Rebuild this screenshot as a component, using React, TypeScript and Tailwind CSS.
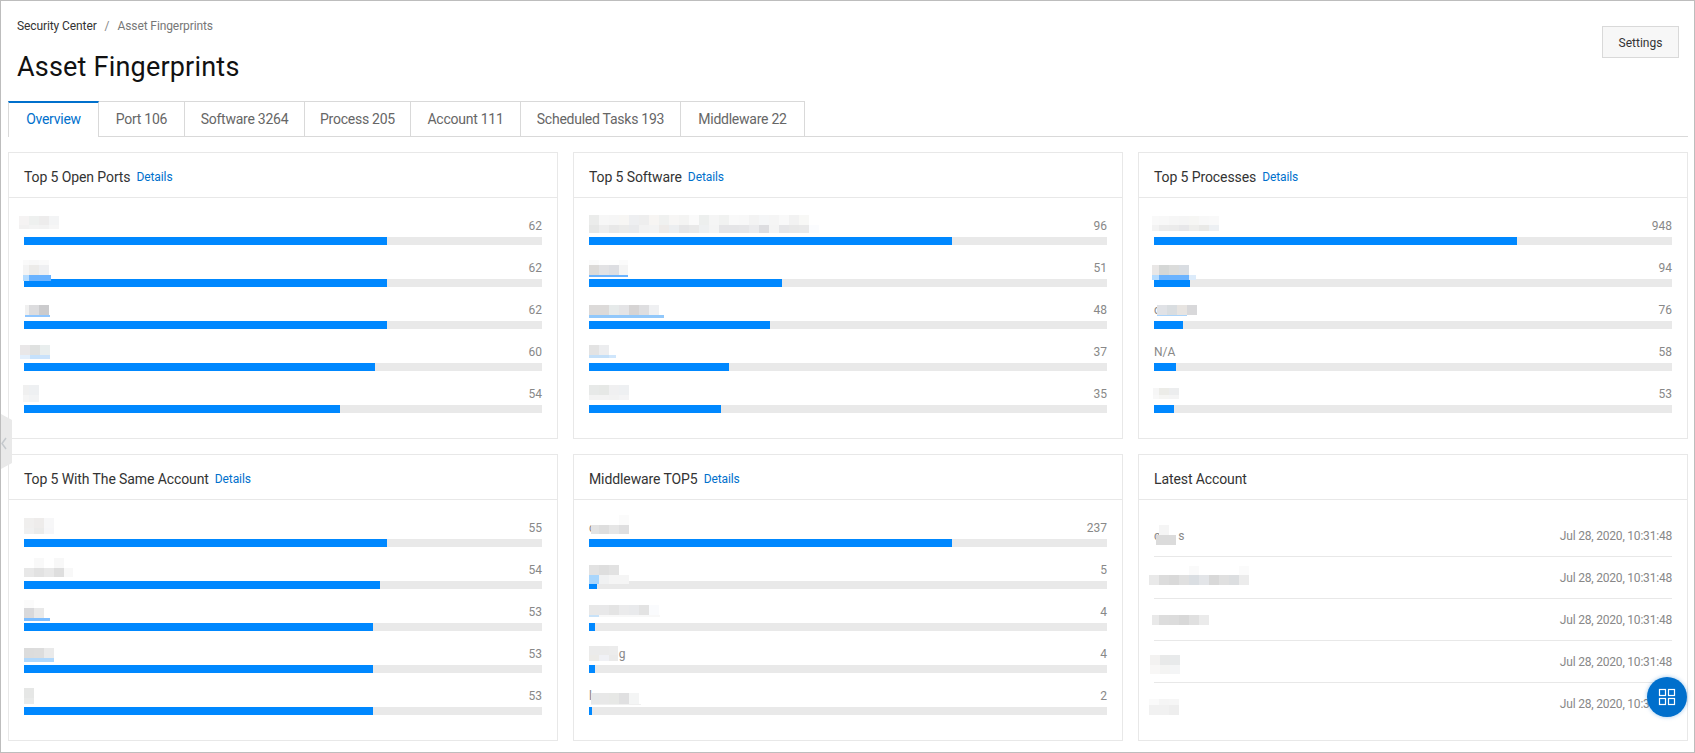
const font = "font-['Roboto','Liberation_Sans',sans-serif]";

// [row height, cell width, cell classes split by " | "]
type MosaicRow = [string, string, string];

interface Blur {
  pos: string;
  rows: MosaicRow[];
}

interface BarRow {
  label?: string;
  value: number;
  blur?: Blur;
}

function Mosaic({ pos, rows }: Blur) {
  return (
    <div className={`absolute ${pos}`}>
      {rows.map((row, i) => (
        <div key={i} className={`flex ${row[0]}`}>
          {row[2].split(" | ").map((cell, j) => (
            <div key={j} className={`h-full ${row[1]} ${cell}`} />
          ))}
        </div>
      ))}
    </div>
  );
}

function Bars({ rows }: { rows: BarRow[] }) {
  const max = rows[0].value;
  return (
    <div className="flex flex-col gap-[14px] px-[15px] pt-[19px]">
      {rows.map((row, i) => (
        <div key={i} className="relative">
          <div className="flex h-[18px] items-center justify-between text-xs leading-[18px] text-[#888888]">
            <span className="whitespace-pre">{row.label}</span>
            <span>{row.value}</span>
          </div>
          <div className="mt-[2px] h-2 bg-[#e9e9e9]">
            <div className="h-full bg-[#0088ff]" style={{ width: `${(row.value / max) * 70}%` }} />
          </div>
          {row.blur && <Mosaic {...row.blur} />}
        </div>
      ))}
    </div>
  );
}

function Card({ title, details, children }: { title: string; details?: boolean; children: React.ReactNode }) {
  return (
    <div className="h-[287px] border border-[#e8e8e8] bg-white">
      <div className="flex h-[45px] items-center border-b border-[#e8e8e8] px-[15px] pt-[4px]">
        <span className="text-sm tracking-[-0.1px] text-[#333333]">{title}</span>
        {details && <a className="ml-[6px] text-xs tracking-[-0.1px] text-[#0070cc]">Details</a>}
      </div>
      {children}
    </div>
  );
}

const ports: BarRow[] = [
  { value: 62, blur: { pos: "left-[-5px] top-[-1px]", rows: [
    ["h-[9px]", "w-[10px]", "bg-[#f5f3f3] | bg-[#eef0ef] | bg-[#edecec] | bg-[#f3f4f5]"],
    ["h-[4px]", "w-[10px]", "bg-[#f2f1f1] | bg-[#f3f3f3] | bg-[#f2f2f2] | bg-[#f6f6f6]"],
  ] } },
  { value: 62, blur: { pos: "left-[-1px] top-[1px]", rows: [
    ["h-[5px]", "", "w-[6px] bg-[#fafafa] | w-[10px] bg-[#f8f8f8] | w-[10px] bg-[#fafafa]"],
    ["h-[10px]", "", "w-[6px] bg-[#f4f4f4] | w-[10px] bg-[#ecebe9] | w-[10px] bg-[#eff0f2]"],
    ["h-[6px]", "", "w-[6px] bg-[#b5dcff] | w-[22px] bg-[#6ab3ff]"],
  ] } },
  { value: 62, blur: { pos: "left-[1px] top-[4px]", rows: [
    ["h-[10px]", "", "w-[4px] bg-[#f0f0f0] | w-[10px] bg-[#dcdcde] | w-[10px] bg-[#cbcbcd]"],
    ["h-[2px]", "", "w-[25px] bg-[#8fc6ff]"],
  ] } },
  { value: 60, blur: { pos: "left-[-4px] top-[2px]", rows: [
    ["h-[10px]", "w-[10px]", "bg-[#e9e7e8] | bg-[#dfe1e0] | bg-[#e9eeee]"],
    ["h-[4px]", "w-[10px]", "bg-[#e3effc] | bg-[#c5e1fb] | bg-[#c9e2fb]"],
  ] } },
  { value: 54, blur: { pos: "left-[-1px] top-0", rows: [
    ["h-[10px]", "", "w-[6px] bg-[#f0f0f0] | w-[10px] bg-[#eef0f2]"],
    ["h-[7px]", "", "w-[6px] bg-[#f5f5f5] | w-[10px] bg-[#f2f3f4]"],
  ] } },
];

const software: BarRow[] = [
  { value: 96, blur: { pos: "left-0 top-[-2px]", rows: [
    ["h-[10px]", "w-[10px]", "bg-[#ebeceb] | bg-[#f7f7f7] | bg-[#f6f6f6] | bg-[#f7f6f4] | bg-[#eeeff1] | bg-[#eeeeee] | bg-[#f7f5f3] | bg-[#f0f1f0] | bg-[#f7f6f5] | bg-[#f4f4f3] | bg-[#fafafa] | bg-[#edefee] | bg-[#f5f5f5] | bg-[#f1f2f1] | bg-[#f9f9f9] | bg-[#f8f8f8] | bg-[#f3f3f3] | bg-[#f5f6f7] | bg-[#f5f5f5] | bg-[#f9f9f9] | bg-[#f2f2f2] | bg-[#f8f8f6]"],
    ["h-[8px]", "w-[10px]", "bg-[#e6e7e6] | bg-[#eeeeee] | bg-[#e8e8e8] | bg-[#ebebea] | bg-[#e9eaec] | bg-[#f2f2f2] | bg-[#f3f3f3] | bg-[#eeebe9] | bg-[#eceef0] | bg-[#e6e6e7] | bg-[#e9e9e9] | bg-[#eef0f1] | bg-[#f4f4f4] | bg-[#e5e5e7] | bg-[#e5e5e7] | bg-[#e6e6e8] | bg-[#ebebed] | bg-[#dddde0] | bg-[#f4f4f4] | bg-[#e6e6e8] | bg-[#e8e8e8] | bg-[#e9e9e9] | bg-[#fbfcfe]"],
  ] } },
  { value: 51, blur: { pos: "left-0 top-[1px]", rows: [
    ["h-[5px]", "", "w-[10px] bg-[#fbfbfb] | w-[20px] bg-[#fefefe] | w-[9px] bg-[#fbfbfb]"],
    ["h-[10px]", "", "w-[10px] bg-[#dcdad8] | w-[10px] bg-[#e2e2e4] | w-[10px] bg-[#dddee2] | w-[9px] bg-[#f4f4f4]"],
    ["h-[2px]", "", "w-[39px] bg-[#6ab3ff]"],
  ] } },
  { value: 48, blur: { pos: "left-0 top-[4px]", rows: [
    ["h-[10px]", "w-[10px]", "bg-[#dcdad9] | bg-[#dcdad9] | bg-[#e6eaea] | bg-[#e4e4e6] | bg-[#d6d4d4] | bg-[#dedee0] | bg-[#eff0f2]"],
    ["h-[3px]", "", "w-[75px] bg-[#91c8fb]"],
  ] } },
  { value: 37, blur: { pos: "left-0 top-[2px]", rows: [
    ["h-[10px]", "w-[10px]", "bg-[#e3e3e3] | bg-[#ecedef]"],
    ["h-[3px]", "", "w-[20px] bg-[#c3dff8] | w-[7px] bg-[#cfe6fc]"],
  ] } },
  { value: 35, blur: { pos: "left-0 top-0", rows: [
    ["h-[10px]", "w-[10px]", "bg-[#e7e9e8] | bg-[#e6e8e6] | bg-[#f0f0f1] | bg-[#eef0f2]"],
    ["h-[5px]", "w-[10px]", "bg-[#f3f3f3] | bg-[#f3f3f3] | bg-[#f2f2f2] | bg-[#f4f4f5]"],
  ] } },
];

const processes: BarRow[] = [
  { value: 948, blur: { pos: "left-[-2px] top-[-1px]", rows: [
    ["h-[9px]", "", "w-[7px] bg-[#f9f9f9] | w-[10px] bg-[#f8f8f8] | w-[10px] bg-[#f6f6f6] | w-[10px] bg-[#f5f5f5] | w-[10px] bg-[#f6f6f4] | w-[10px] bg-[#f8f8f8] | w-[10px] bg-[#f9f9f9]"],
    ["h-[6px]", "", "w-[7px] bg-[#f3f3f3] | w-[10px] bg-[#ececec] | w-[10px] bg-[#ebebeb] | w-[10px] bg-[#e7e7e9] | w-[10px] bg-[#eeeeec] | w-[10px] bg-[#e9e9e7] | w-[10px] bg-[#edf0f3]"],
  ] } },
  { value: 94, blur: { pos: "left-[-2px] top-[6px]", rows: [
    ["h-[10px]", "", "w-[7px] bg-[#e9e7e6] | w-[10px] bg-[#d5d7d6] | w-[10px] bg-[#dbdcdb] | w-[10px] bg-[#d9dde2]"],
    ["h-[5px]", "", "w-[7px] bg-[#b5dcff] | w-[30px] bg-[#6ab3ff] | w-[7px] bg-[#dcebfa]"],
  ] } },
  { label: "c", value: 76, blur: { pos: "left-[3px] top-[4px]", rows: [
    ["h-[10px]", "w-[10px]", "bg-[#e0e2e6] | bg-[#d9dde0] | bg-[#e7e4e1] | bg-[#d8d8da]"],
    ["h-[1px]", "", "w-[30px] bg-[#aad4fb]"],
  ] } },
  { label: "N/A", value: 58 },
  { value: 53, blur: { pos: "left-[-1px] top-[3px]", rows: [
    ["h-[7px]", "", "w-[6px] bg-[#f6f6f6] | w-[10px] bg-[#ecece8] | w-[10px] bg-[#ecedee]"],
    ["h-[4px]", "", "w-[6px] bg-[#f8f8f8] | w-[10px] bg-[#f5f5f3] | w-[10px] bg-[#f4f4f4]"],
  ] } },
];

const accounts: BarRow[] = [
  { value: 55, blur: { pos: "left-0 top-[-1px]", rows: [
    ["h-[10px]", "w-[10px]", "bg-[#f0efee] | bg-[#eeeceb] | bg-[#f7f7f8]"],
    ["h-[6px]", "w-[10px]", "bg-[#f0f0f0] | bg-[#ebebea] | bg-[#f6f6f8]"],
  ] } },
  { value: 54, blur: { pos: "left-0 top-[-3px]", rows: [
    ["h-[10px]", "w-[10px]", "bg-white | bg-[#f9f9f9] | bg-white | bg-[#f8f8f8]"],
    ["h-[9px]", "", "w-[10px] bg-[#e8e8e8] | w-[10px] bg-[#e2e2e2] | w-[10px] bg-[#e8e8e8] | w-[10px] bg-[#dedede] | w-[9px] bg-[#f8f8f8]"],
  ] } },
  { value: 53, blur: { pos: "left-0 top-[-3px]", rows: [
    ["h-[8px]", "w-[10px]", "bg-[#fbfbfb]"],
    ["h-[10px]", "w-[10px]", "bg-[#d9d9db] | bg-[#e9e9e9]"],
    ["h-[3px]", "", "w-[26px] bg-[#7cbdff]"],
  ] } },
  { value: 53, blur: { pos: "left-0 top-[3px]", rows: [
    ["h-[10px]", "w-[10px]", "bg-[#dcdcdc] | bg-[#dddddd] | bg-[#eaeaea]"],
    ["h-[4px]", "", "w-[30px] bg-[#b0d8fc]"],
  ] } },
  { value: 53, blur: { pos: "left-0 top-[1px]", rows: [
    ["h-[10px]", "w-[10px]", "bg-[#e6e7e6]"],
    ["h-[6px]", "w-[10px]", "bg-[#e9eae9]"],
  ] } },
];

const middleware: BarRow[] = [
  { label: "c", value: 237, blur: { pos: "left-[2px] top-[-4px]", rows: [
    ["h-[10px]", "", "w-[28px] bg-transparent | w-[10px] bg-[#fbfbfb]"],
    ["h-[9px]", "", "w-[8px] bg-[#e3e3e3] | w-[10px] bg-[#dedede] | w-[10px] bg-[#e6e6e6] | w-[10px] bg-[#dfdfe0]"],
  ] } },
  { value: 5, blur: { pos: "left-0 top-[4px]", rows: [
    ["h-[10px]", "w-[10px]", "bg-[#e2e2e2] | bg-[#dedede] | bg-[#e2e2e2]"],
    ["h-[9px]", "w-[10px]", "bg-[#a9d6fc] | bg-[#f0f1f2] | bg-[#f5f5f5] | bg-[#f5f5f5]"],
  ] } },
  { value: 4, blur: { pos: "left-0 top-[2px]", rows: [
    ["h-[10px]", "w-[10px]", "bg-[#e8e8e8] | bg-[#e8e8e9] | bg-[#e4e4e4] | bg-[#ebebec] | bg-[#e9eaec] | bg-[#e3e3e3] | bg-[#fafbfd]"],
    ["h-[2px]", "", "w-[10px] bg-[#c8e2f8] | w-[61px] bg-[#f8f8f8]"],
  ] } },
  { label: "          g", value: 4, blur: { pos: "left-0 top-[1px]", rows: [
    ["h-[9px]", "", "w-[10px] bg-[#ebebeb] | w-[10px] bg-[#ebebeb] | w-[9px] bg-[#ececec]"],
    ["h-[6px]", "", "w-[10px] bg-[#ecebe8] | w-[10px] bg-[#f0f1f5] | w-[9px] bg-[#eaeaea]"],
  ] } },
  { label: "l", value: 2, blur: { pos: "left-[2px] top-[6px]", rows: [
    ["h-[11px]", "", "w-[8px] bg-[#e6e8e9] | w-[10px] bg-[#e8e8e8] | w-[10px] bg-[#e7e8e6] | w-[10px] bg-[#e0e0e1] | w-[10px] bg-[#f4f5f5]"],
    ["h-[1px]", "", "w-[50px] bg-[#f0f0f0]"],
  ] } },
];

const latest: { label?: string; blur: Blur }[] = [
  { label: "c      s", blur: { pos: "left-[2px] top-[10px]", rows: [
    ["h-[10px]", "", "w-[3px] bg-transparent | w-[10px] bg-[#f5f5f5]"],
    ["h-[10px]", "", "w-[20px] bg-[#dbdbdb]"],
  ] } },
  { blur: { pos: "left-[-5px] top-[9px]", rows: [
    ["h-[9px]", "w-[10px]", "bg-transparent | bg-transparent | bg-transparent | bg-transparent | bg-[#fafafa] | bg-transparent | bg-transparent | bg-transparent | bg-transparent | bg-[#fbfbfb]"],
    ["h-[10px]", "w-[10px]", "bg-[#e9e9e9] | bg-[#dcdcdc] | bg-[#d9d9d9] | bg-[#e0e0e0] | bg-[#dadee2] | bg-[#e3e5e8] | bg-[#d8d8d8] | bg-[#e0e0e0] | bg-[#dcdee0] | bg-[#ececec]"],
  ] } },
  { blur: { pos: "left-[-2px] top-[16px]", rows: [
    ["h-[10px]", "", "w-[7px] bg-[#e9e9e9] | w-[10px] bg-[#dddddd] | w-[10px] bg-[#dcdcdc] | w-[10px] bg-[#d8d8d8] | w-[10px] bg-[#e0e0e0] | w-[10px] bg-[#ebebeb]"],
  ] } },
  { blur: { pos: "left-[-4px] top-[14px]", rows: [
    ["h-[10px]", "w-[10px]", "bg-[#f3f2f1] | bg-[#e8e9e9] | bg-[#e8eaeb]"],
    ["h-[9px]", "w-[10px]", "bg-[#f8f7f6] | bg-[#f4f4f3] | bg-[#f4f5f6]"],
  ] } },
  { blur: { pos: "left-[-5px] top-[16px]", rows: [
    ["h-[6px]", "w-[10px]", "bg-[#fafafa] | bg-[#f5f5f5] | bg-[#f6f6f6]"],
    ["h-[10px]", "w-[10px]", "bg-[#f1f1f1] | bg-[#f1f1f1] | bg-[#eeeeee]"],
  ] } },
];

const tabs = [
  { name: "Overview", w: "w-[91px]" },
  { name: "Port 106", w: "w-[86px]" },
  { name: "Software 3264", w: "w-[120px]" },
  { name: "Process 205", w: "w-[106px]" },
  { name: "Account 111", w: "w-[110px]" },
  { name: "Scheduled Tasks 193", w: "w-[160px]" },
  { name: "Middleware 22", w: "w-[124px]" },
];

export default function App() {
  return (
    <div className={`relative h-[753px] overflow-hidden border border-[#bdbdbd] bg-white pl-[7px] pr-[6px] ${font}`}>
      {/* header */}
      <div className="flex h-[100px] items-start justify-between">
        <div className="pl-[9px]">
          <div className="mt-[16px] flex h-[18px] items-center text-xs tracking-[-0.1px]">
            <span className="text-[#333333]">Security Center</span>
            <span className="mx-[8px] text-[#888888]">/</span>
            <span className="text-[#777777]">Asset Fingerprints</span>
          </div>
          <h1 className="mt-[14px] text-[27px] leading-[36px] tracking-[0.2px] text-[#111111]">Asset Fingerprints</h1>
        </div>
        <button className="mr-[9px] mt-[25px] h-[32px] w-[77px] border border-[#d9d9d9] bg-[#f7f7f7] pt-[2px] text-xs text-[#333333]">
          Settings
        </button>
      </div>

      {/* tabs */}
      <div className="flex h-[36px] border-b border-[#d9d9d9]">
        {tabs.map((tab, i) => (
          <div
            key={tab.name}
            className={
              i === 0
                ? `${tab.w} -mb-px h-[36px] border-l border-r border-t-2 border-l-[#d9d9d9] border-r-[#d9d9d9] border-t-[#0070cc] bg-white text-center text-sm leading-[33px] tracking-[-0.25px] text-[#0070cc]`
                : `${tab.w} h-[35px] border-r border-t border-[#d9d9d9] text-center text-sm leading-[34px] tracking-[-0.25px] text-[#666666]`
            }
          >
            {tab.name}
          </div>
        ))}
      </div>

      {/* cards */}
      <div className="mt-[15px] grid grid-cols-3 gap-[15px]">
        <Card title="Top 5 Open Ports" details>
          <Bars rows={ports} />
        </Card>
        <Card title="Top 5 Software" details>
          <Bars rows={software} />
        </Card>
        <Card title="Top 5 Processes" details>
          <Bars rows={processes} />
        </Card>
        <Card title="Top 5 With The Same Account" details>
          <Bars rows={accounts} />
        </Card>
        <Card title="Middleware TOP5" details>
          <Bars rows={middleware} />
        </Card>
        <Card title="Latest Account">
          <div className="px-[15px] pt-[15px]">
            {latest.map((row, i) => (
              <div
                key={i}
                className="relative flex h-[42px] items-center justify-between border-b border-[#e8e8e8] text-xs text-[#888888] last:border-b-0"
              >
                <span className="whitespace-pre">{row.label}</span>
                <span className="tracking-[-0.2px]">Jul 28, 2020, 10:31:48</span>
                <Mosaic {...row.blur} />
              </div>
            ))}
          </div>
        </Card>
      </div>

      {/* collapse handle */}
      <svg className="absolute left-0 top-[413px]" width="11" height="55" viewBox="0 0 11 55">
        <polygon points="0,0 11,6 11,49 0,55" fill="#e9e9e9" />
        <path d="M5 24 L1 29.5 L5 35" fill="none" stroke="#c5c9cd" strokeWidth="1.5" />
      </svg>

      {/* floating button */}
      <div className="absolute bottom-[35px] right-[7px] flex h-10 w-10 items-center justify-center rounded-full bg-[#006fcc] shadow-[0_0_4px_rgba(0,111,204,0.4)]">
        <svg width="18" height="18" viewBox="0 0 18 18" fill="none" stroke="#ffffff" strokeWidth="1.2">
          <rect x="1.5" y="1.5" width="6" height="6" />
          <rect x="10.5" y="1.5" width="6" height="6" />
          <rect x="1.5" y="10.5" width="6" height="6" />
          <rect x="10.5" y="10.5" width="6" height="6" />
        </svg>
      </div>
    </div>
  );
}
